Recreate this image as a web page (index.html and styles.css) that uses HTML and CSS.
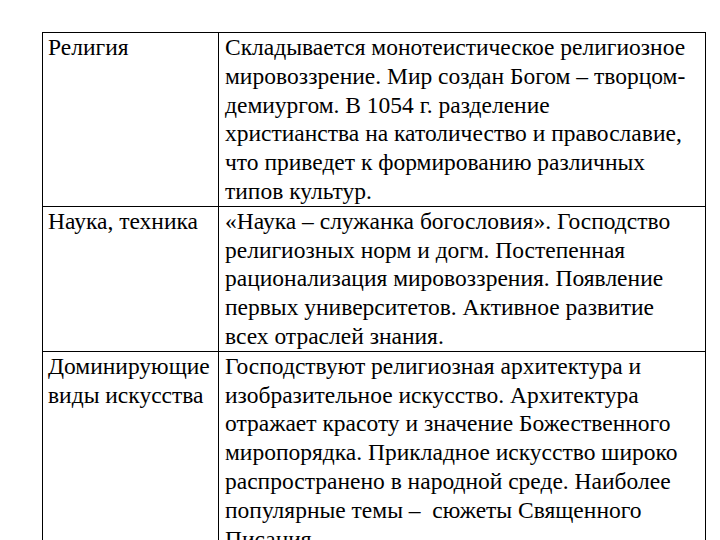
FILE: index.html
```html
<!DOCTYPE html>
<html lang="ru">
<head>
<meta charset="utf-8">
<link rel="stylesheet" href="styles.css">
</head>
<body>
<div class="page">
<table class="grid">
<colgroup><col class="c1"><col class="c2"></colgroup>
<tr>
<td class="lab">Религия</td>
<td class="txt">Складывается монотеистическое религиозное<br>мировоззрение. Мир создан Богом – творцом-<br>демиургом. В 1054 г. разделение<br>христианства на католичество и православие,<br>что приведет к формированию различных<br>типов культур.</td>
</tr>
<tr>
<td class="lab">Наука, техника</td>
<td class="txt">«Наука – служанка богословия». Господство<br>религиозных норм и догм. Постепенная<br>рационализация мировоззрения. Появление<br>первых университетов. Активное развитие<br>всех отраслей знания.</td>
</tr>
<tr>
<td class="lab">Доминирующие<br>виды искусства</td>
<td class="txt">Господствуют религиозная архитектура и<br>изобразительное искусство. Архитектура<br>отражает красоту и значение Божественного<br>миропорядка. Прикладное искусство широко<br>распространено в народной среде. Наиболее<br>популярные темы –&nbsp; сюжеты Священного<br>Писания.</td>
</tr>
</table>
</div>
</body>
</html>
```

FILE: styles.css
```css
html, body {
  margin: 0;
  padding: 0;
  background: #ffffff;
}
body {
  width: 720px;
  height: 540px;
  overflow: hidden;
  font-family: "Liberation Serif", "Times New Roman", serif;
  font-size: 24px;
  color: #000;
}
.page {
  padding: 32px 0 0 42px;
}
.grid {
  border-collapse: collapse;
  width: 664px;
  table-layout: fixed;
}
.c1 { width: 176px; }
.lab,
.txt {
  border: 1px solid #000;
  vertical-align: top;
  font-family: "Liberation Serif", "Times New Roman", serif;
  font-size: 23.5px;
  line-height: 28.8px;
  padding: 0 2px 0 6px;
  white-space: nowrap;
}
.lab {
  padding-left: 5px;
}
```
